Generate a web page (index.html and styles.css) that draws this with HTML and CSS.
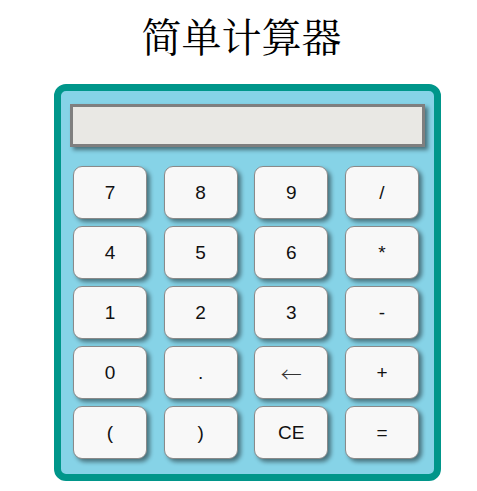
FILE: index.html
```html
<!DOCTYPE html>
<html lang="zh">
<head>
<meta charset="utf-8">
<title>简单计算器</title>
<link rel="stylesheet" href="styles.css">
</head>
<body>
<h1 class="title">简单计算器</h1>
<div class="calc">
  <div class="display"></div>
  <div class="keys">
    <button class="key">7</button>
    <button class="key">8</button>
    <button class="key">9</button>
    <button class="key">/</button>
    <button class="key">4</button>
    <button class="key">5</button>
    <button class="key">6</button>
    <button class="key">*</button>
    <button class="key">1</button>
    <button class="key">2</button>
    <button class="key">3</button>
    <button class="key">-</button>
    <button class="key">0</button>
    <button class="key">.</button>
    <button class="key key-arrow">←</button>
    <button class="key">+</button>
    <button class="key">(</button>
    <button class="key">)</button>
    <button class="key">CE</button>
    <button class="key">=</button>
  </div>
</div>
</body>
</html>
```
FILE: styles.css
```css
html, body {
  margin: 0;
  padding: 0;
  background: #ffffff;
}
.title {
  margin: 0;
  padding-top: 11px;
  height: 74px;
  box-sizing: border-box;
  text-align: center;
  font-family: "Noto Serif CJK SC", "Noto Sans CJK SC", serif;
  font-weight: normal;
  font-size: 40px;
  line-height: 48px;
  color: #000;
  letter-spacing: 0;
  padding-left: 6px;
}
.calc {
  width: 387px;
  height: 397px;
  box-sizing: border-box;
  margin: 10px 0 0 54px;
  border: 7px solid #00968a;
  border-radius: 12px;
  background: #86d3e7;
  padding: 13px 9px 0 9px;
}
.display {
  height: 43px;
  box-sizing: border-box;
  border: 3px solid #7f7f7f;
  background: #e9e8e4;
  box-shadow: 3px 3px 4px rgba(0, 0, 0, 0.45);
}
.keys {
  display: grid;
  grid-template-columns: repeat(4, 74px);
  grid-auto-rows: 53px;
  column-gap: 16.67px;
  row-gap: 7px;
  margin: 19px 0 0 3px;
}
.key {
  box-sizing: border-box;
  border: 1px solid #8a8a8a;
  border-radius: 9px;
  background: #f8f8f8;
  box-shadow: 3px 3px 4px rgba(0, 0, 0, 0.45);
  font-family: "Liberation Sans", Arial, sans-serif;
  font-size: 19px;
  color: #111;
  padding: 0;
}
.key-arrow {
  font-family: "Noto Sans CJK SC", sans-serif;
  font-size: 21px;
  font-weight: 300;
  color: #333;
}
```
